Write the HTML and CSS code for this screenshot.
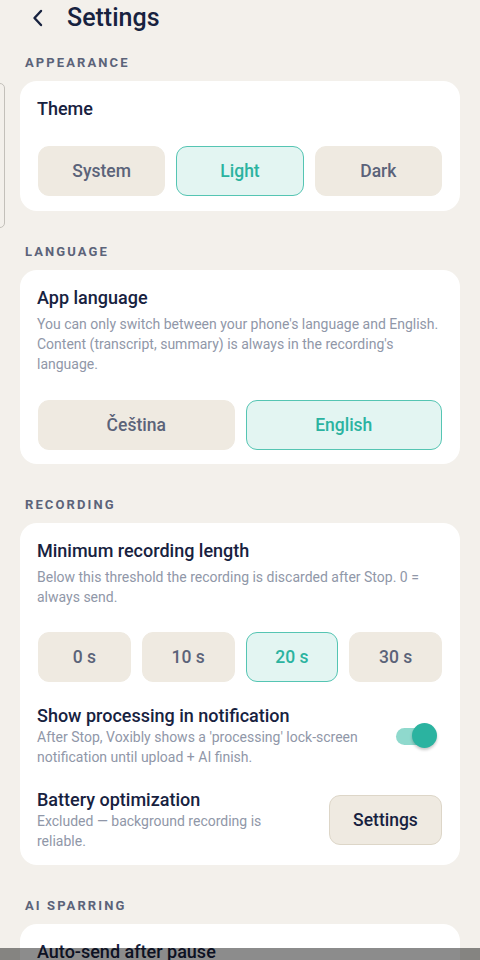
FILE: index.html
```html
<!DOCTYPE html>
<html lang="en">
<head>
<meta charset="utf-8">
<title>Settings</title>
<link rel="stylesheet" href="styles.css">
</head>
<body>
<div class="edge-handle"></div>
<header class="topbar">
  <svg class="back" width="14" height="18" viewBox="0 0 14 18" aria-hidden="true"><path d="M10 2 L3.5 9 L10 16" fill="none" stroke="#17223f" stroke-width="2.4" stroke-linecap="round" stroke-linejoin="round"/></svg>
  <h1 class="title">Settings</h1>
</header>
<main class="content">
  <h2 class="section-label first">APPEARANCE</h2>
  <section class="card">
    <h3 class="card-title">Theme</h3>
    <div class="options three theme-options">
      <button class="opt">System</button>
      <button class="opt active">Light</button>
      <button class="opt">Dark</button>
    </div>
  </section>

  <h2 class="section-label">LANGUAGE</h2>
  <section class="card">
    <h3 class="card-title">App language</h3>
    <p class="desc">You can only switch between your phone's language and English. Content (transcript, summary) is always in the recording's language.</p>
    <div class="options two lang-options">
      <button class="opt">Čeština</button>
      <button class="opt active">English</button>
    </div>
  </section>

  <h2 class="section-label">RECORDING</h2>
  <section class="card">
    <h3 class="card-title">Minimum recording length</h3>
    <p class="desc">Below this threshold the recording is discarded after Stop. 0 = always send.</p>
    <div class="options four len-options">
      <button class="opt">0 s</button>
      <button class="opt">10 s</button>
      <button class="opt active">20 s</button>
      <button class="opt">30 s</button>
    </div>
    <div class="row notif-row">
      <div class="row-text">
        <h3 class="card-title tight">Show processing in notification</h3>
        <p class="desc">After Stop, Voxibly shows a 'processing' lock-screen notification until upload + AI finish.</p>
      </div>
      <div class="toggle"><span class="track"></span><span class="thumb"></span></div>
    </div>
    <div class="row battery-row">
      <div class="row-text narrow">
        <h3 class="card-title tight">Battery optimization</h3>
        <p class="desc">Excluded — background recording is reliable.</p>
      </div>
      <button class="settings-btn">Settings</button>
    </div>
  </section>

  <h2 class="section-label">AI SPARRING</h2>
  <section class="card">
    <h3 class="card-title">Auto-send after pause</h3>
  </section>
</main>
<div class="nav-bar"></div>
</body>
</html>
```

FILE: styles.css
```css
* { box-sizing: border-box; }
html, body { margin: 0; padding: 0; }
body {
  background: #f3f0eb;
  font-family: Roboto, "Noto Sans", "Liberation Sans", sans-serif;
  color: #17223f;
  width: 480px;
  overflow-x: hidden;
}
.edge-handle {
  position: absolute;
  left: -20px;
  top: 83px;
  width: 25px;
  height: 145px;
  border: 1px solid #c3c0ba;
  border-radius: 5px;
}
.topbar {
  display: flex;
  align-items: center;
  height: 34px;
  padding-top: 2px;
  padding-left: 31px;
}
.back { display: block; margin-right: 22px; }
.title {
  margin: 0;
  font-size: 25px;
  line-height: 32px;
  font-weight: 500;
  color: #17223f;
}
.content { padding: 0 20px 40px; }
.section-label {
  margin: 33px 0 10px 5px;
  font-size: 13px;
  line-height: 16px;
  font-weight: 700;
  letter-spacing: 2.1px;
  color: #5b6379;
}
.section-label.first { margin-top: 21px; }
.card {
  background: #ffffff;
  border-radius: 17px;
  padding: 16px 18px 14px 17px;
}
.card-title {
  margin: 0;
  font-size: 18px;
  line-height: 24px;
  font-weight: 500;
  color: #17223f;
}
.card-title.tight { line-height: 23px; }
.desc {
  margin: 4px 0 0;
  font-size: 14px;
  line-height: 20px;
  color: #9097a8;
}
.tight + .desc { margin-top: 0; }
.options {
  display: grid;
  gap: 11px;
  padding-left: 1px;
}
.options.three { grid-template-columns: repeat(3, 1fr); }
.options.two { grid-template-columns: repeat(2, 1fr); }
.options.four { grid-template-columns: repeat(4, 1fr); }
.theme-options { margin-top: 25px; margin-bottom: 1px; }
.lang-options { margin-top: 26px; }
.len-options { margin-top: 25px; }
.opt {
  height: 50px;
  border: 1.5px solid #efeae1;
  border-radius: 11px;
  background: #efeae1;
  font-family: inherit;
  font-size: 17.5px;
  font-weight: 500;
  color: #5b6379;
  padding: 0;
}
.opt.active {
  background: #e3f5f2;
  border-color: #55c5b3;
  color: #2bb3a0;
}
.row {
  display: flex;
  align-items: center;
  justify-content: space-between;
}
.notif-row { margin-top: 22px; }
.battery-row { margin-top: 21px; }
.row-text { flex: 0 1 340px; }
.row-text.narrow { flex-basis: 240px; }
.toggle {
  position: relative;
  width: 42px;
  height: 26px;
  margin-right: 4px;
  flex: none;
}
.track {
  position: absolute;
  left: 0;
  top: 5px;
  width: 34px;
  height: 17px;
  border-radius: 9px;
  background: #8fd9cd;
}
.thumb {
  position: absolute;
  right: 1px;
  top: 0;
  width: 25px;
  height: 25px;
  border-radius: 50%;
  background: #2bb3a0;
  box-shadow: 0 2px 3px rgba(0,0,0,0.22);
}
.settings-btn {
  flex: none;
  width: 113px;
  height: 50px;
  margin-right: 0;
  border: 1px solid #ddd6c8;
  border-radius: 11px;
  background: #efeae1;
  font-family: inherit;
  font-size: 17.5px;
  font-weight: 500;
  color: #17223f;
  padding: 0;
}
.nav-bar {
  position: fixed;
  left: 0;
  right: 0;
  bottom: 0;
  height: 12px;
  background: rgba(0,0,0,0.45);
}
```
